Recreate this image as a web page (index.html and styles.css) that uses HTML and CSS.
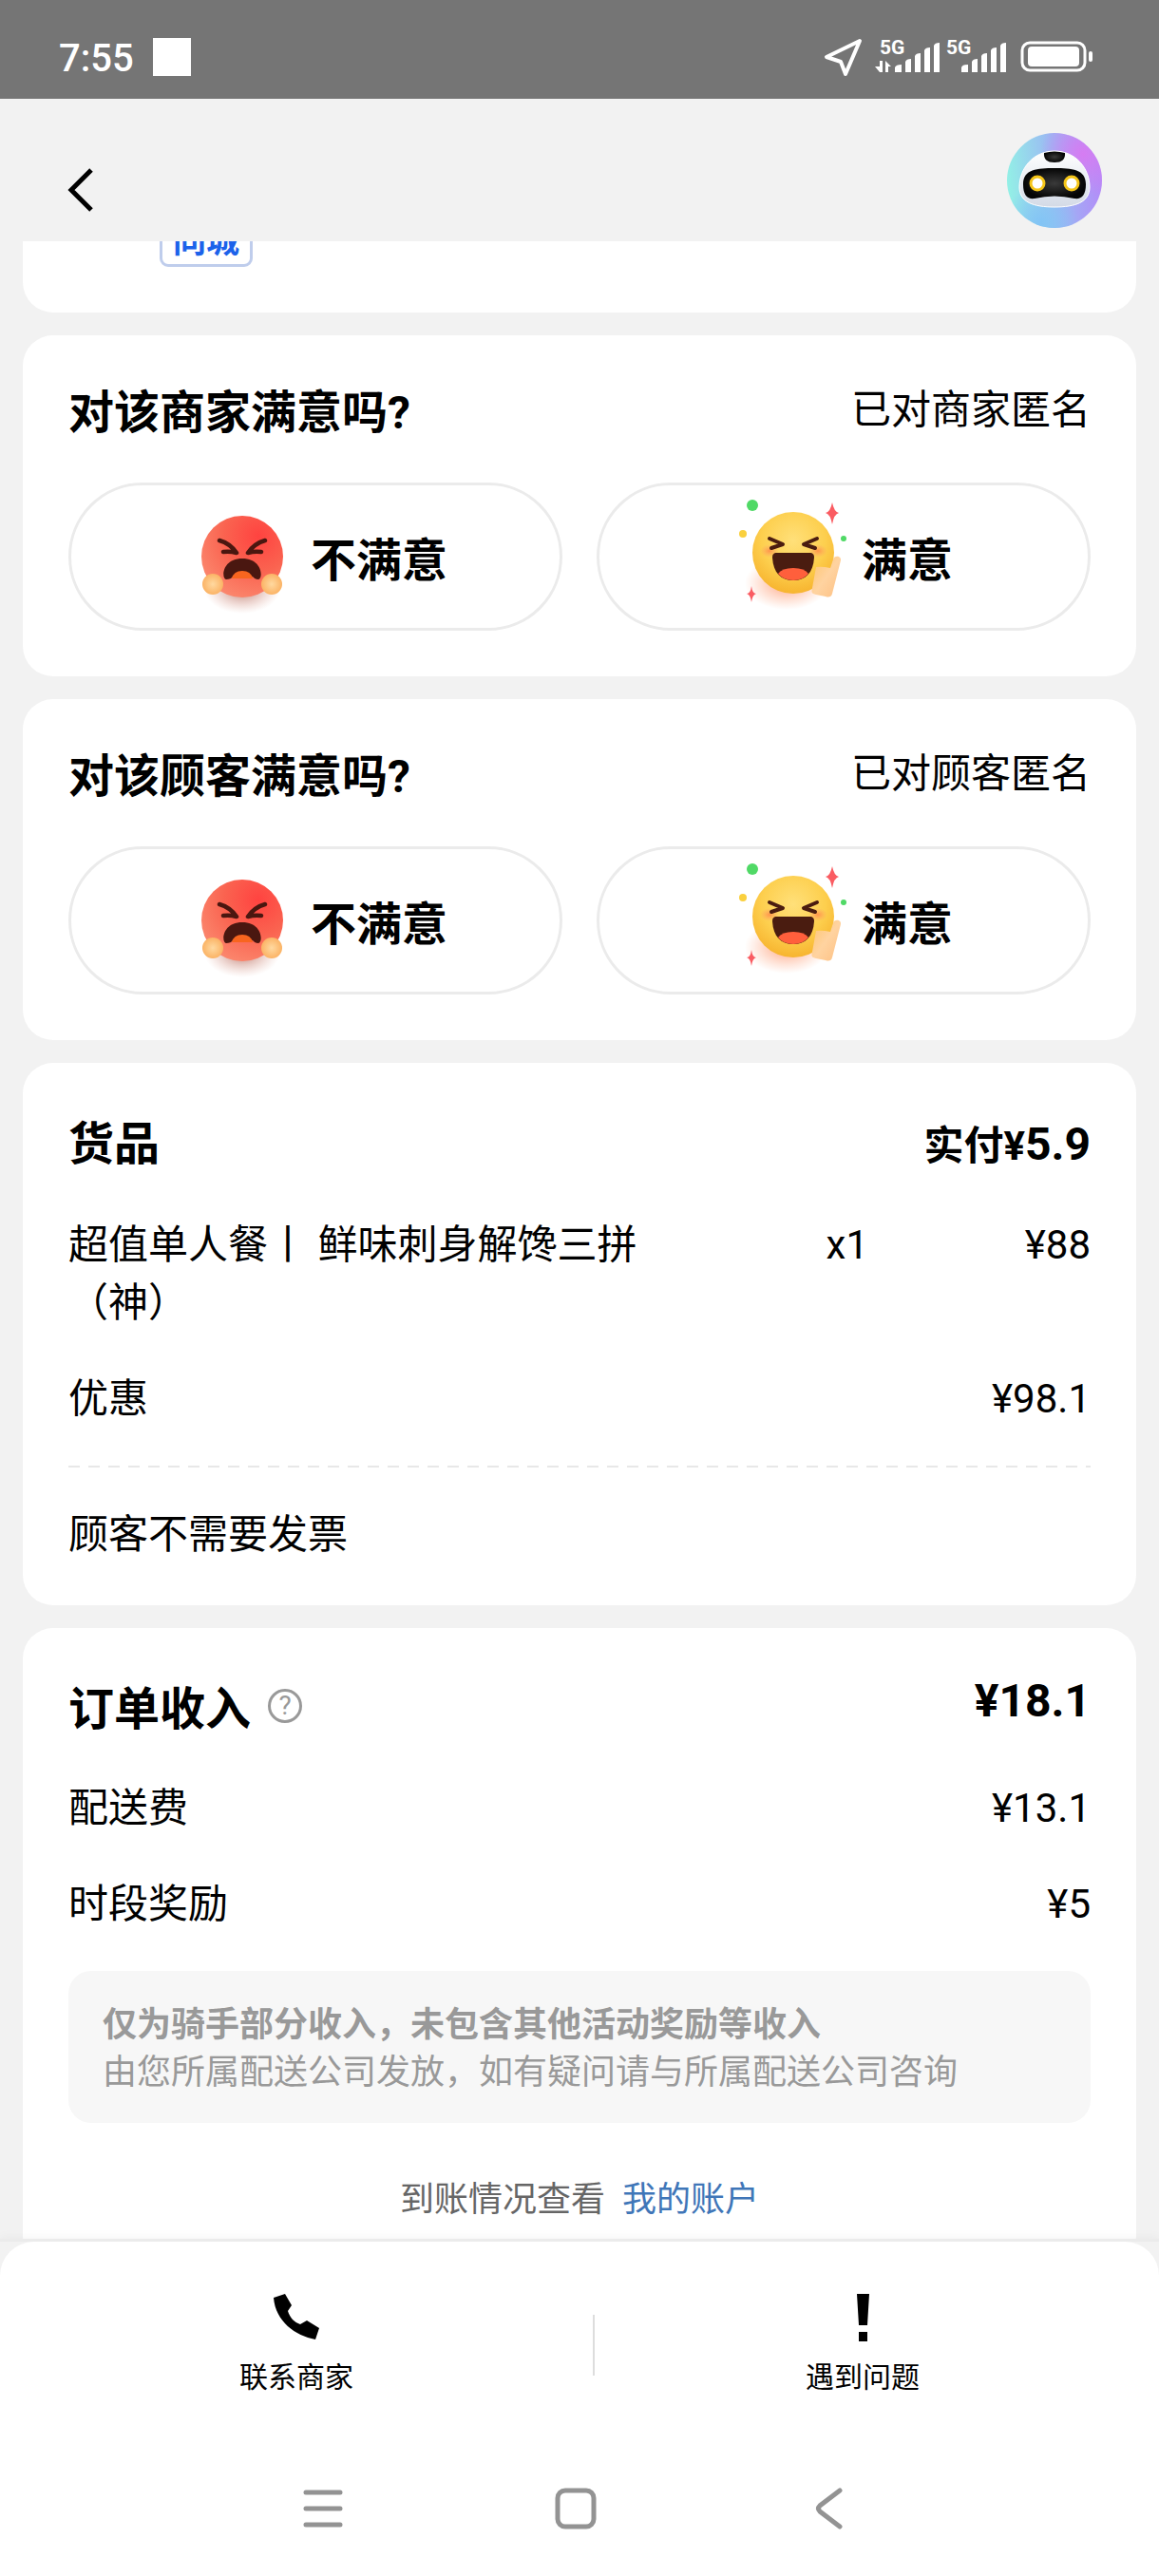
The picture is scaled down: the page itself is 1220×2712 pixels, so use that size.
FILE: index.html
```html
<!DOCTYPE html>
<html lang="zh-CN">
<head>
    <meta charset="UTF-8">
    <meta name="viewport" content="width=device-width, initial-scale=1.0">
    <title>订单详情</title>
    <link rel="stylesheet" href="styles.css">
</head>
<body>
    <!-- shared drawings -->
    <svg class="sprite" aria-hidden="true">
        <defs>
            <radialGradient id="angry-skin" cx="0.7" cy="0.25" r="0.85">
                <stop offset="0" stop-color="#ff4340"/>
                <stop offset="0.5" stop-color="#fa6350"/>
                <stop offset="1" stop-color="#fb8a70"/>
            </radialGradient>
            <radialGradient id="happy-skin" cx="0.5" cy="0.35" r="0.65">
                <stop offset="0" stop-color="#ffe07a"/>
                <stop offset="0.6" stop-color="#fdcf4e"/>
                <stop offset="1" stop-color="#f7b42f"/>
            </radialGradient>
            <radialGradient id="fist">
                <stop offset="0" stop-color="#ffd9a0"/>
                <stop offset="1" stop-color="#fbb365"/>
            </radialGradient>
            <radialGradient id="glow-red">
                <stop offset="0" stop-color="#a8584a" stop-opacity="0.8"/>
                <stop offset="1" stop-color="#e0a090" stop-opacity="0"/>
            </radialGradient>
            <radialGradient id="glow-orange">
                <stop offset="0" stop-color="#ff7a45" stop-opacity="0.7"/>
                <stop offset="1" stop-color="#ff9a70" stop-opacity="0"/>
            </radialGradient>
            <linearGradient id="palm" x1="0" y1="0" x2="1" y2="1">
                <stop offset="0" stop-color="#fdc46c"/>
                <stop offset="0.5" stop-color="#ffd3a0"/>
                <stop offset="1" stop-color="#fdc083"/>
            </linearGradient>
        </defs>
        <symbol id="face-angry" viewBox="0 0 128 128">
            <ellipse cx="62" cy="98" rx="40" ry="26" fill="url(#glow-red)"/>
            <circle cx="62" cy="64" r="43" fill="url(#angry-skin)"/>
            <path d="M38 47q11 3 18 13q-7 -2 -14 -1M86 47q-11 3 -18 13q7 -2 14 -1" fill="none" stroke="#4a1710" stroke-width="4.5" stroke-linecap="round" stroke-linejoin="round"/>
            <path d="M45 88c-5 0 -5 -22 17 -22s22 22 17 22c-3 0 -5 -2 -6 -3H52c-1 2 -4 3 -7 3z" fill="#4a1710"/>
            <path d="M51 87q2 -8 11 -8t11 8z" fill="#f8651f"/>
            <circle cx="31" cy="93" r="11" fill="url(#fist)"/>
            <circle cx="93" cy="93" r="11" fill="url(#fist)"/>
        </symbol>
        <symbol id="face-happy" viewBox="0 0 128 128">
            <ellipse cx="55" cy="92" rx="44" ry="28" fill="url(#glow-orange)"/>
            <circle cx="62" cy="60" r="43" fill="url(#happy-skin)"/>
            <ellipse cx="37" cy="58" rx="10" ry="7" fill="url(#glow-orange)"/>
            <ellipse cx="88" cy="58" rx="10" ry="7" fill="url(#glow-orange)"/>
            <path d="M37 45l14 6l-12 4M87 45l-14 6l12 4" fill="none" stroke="#4a1c10" stroke-width="4" stroke-linecap="round" stroke-linejoin="round"/>
            <path d="M45 60H79c4 0 5 2 5 5c-1 16 -9 24 -22 24s-21 -8 -22 -24c0 -3 1 -5 5 -5z" fill="#4a1c10"/>
            <path d="M46 82q4 -6 16 -6t16 6q-6 7 -16 7t-16 -7z" fill="#ff5f3c"/>
            <path d="M86 75q6 -1 15 1l3 -9c1 -5 9 -4 8 1l-9 35c-1 4 -4 4 -7 3l-10 -2c-5 -1 -5 -3 -4 -7z" fill="url(#palm)"/>
            <circle cx="19" cy="10" r="6" fill="#50d966"/>
            <circle cx="9" cy="40" r="4" fill="#fad03e"/>
            <circle cx="115" cy="45" r="3" fill="#50d966"/>
            <path d="M103 7q2 10 7 11q-5 1 -7 12q-2 -11 -7 -12q5 -1 7 -11zM18 95q1 8 5 8q-4 1 -5 9q-1 -8 -5 -9q4 0 5 -8z" fill="#fa5c62"/>
        </symbol>
    </svg>

    <div class="status-bar">
        <div class="status-left">
            <span class="clock">7:55</span>
            <span class="status-block"></span>
        </div>
        <svg class="status-icons" viewBox="0 0 284 44" width="284" height="44" role="img" aria-label="信号与电量">
            <path d="M37 3L2 20L17 25L22 38Z" fill="none" stroke="#fff" stroke-width="4" stroke-linejoin="round"/>
            <g fill="#fff">
                <path d="M58 24h3v12h-3L53 30h5zM64 36V24l6 6h-3v6z"/>
                <text class="signal-text" x="58" y="17">5G</text>
                <path d="M74 36v-5q1 -3 7 -3v8zM85 36V25q1 -3 6 -3v14zM95 36V19q1 -3 6 -3v20zM105 36V13q1 -3 6 -3v26zM115 36V8q1 -3 6 -3v31z"/>
                <text class="signal-text" x="128" y="17">5G</text>
                <path d="M144 36v-5q1 -3 7 -3v8zM155 36V25q1 -3 6 -3v14zM165 36V19q1 -3 6 -3v20zM175 36V13q1 -3 6 -3v26zM185 36V8q1 -3 6 -3v31z"/>
                <rect x="214" y="9" width="54" height="21" rx="4"/>
                <rect x="278" y="14" width="4" height="11" rx="2"/>
            </g>
            <rect x="208" y="5" width="66" height="29" rx="8" fill="none" stroke="#fff" stroke-width="3"/>
        </svg>
    </div>

    <header class="top-bar">
        <button class="back-btn" type="button" aria-label="返回">
            <svg viewBox="0 0 50 50" width="50" height="50"><path d="M36 4L15 25L36 46" fill="none" stroke="#000" stroke-width="5"/></svg>
        </button>
        <button class="robot-btn" type="button" aria-label="智能客服">
            <svg viewBox="0 0 100 100" width="100" height="100">
                <defs>
                    <linearGradient id="halo" x1="0" y1="0.5" x2="1" y2="0.4">
                        <stop offset="0" stop-color="#93f0e6"/>
                        <stop offset="0.5" stop-color="#9bb8f3"/>
                        <stop offset="1" stop-color="#b48af8"/>
                    </linearGradient>
                    <radialGradient id="halo-pink" cx="0.8" cy="0.22" r="0.45">
                        <stop offset="0" stop-color="#d67cf2"/>
                        <stop offset="1" stop-color="#d67cf2" stop-opacity="0"/>
                    </radialGradient>
                    <radialGradient id="halo-blue" cx="0.35" cy="0.95" r="0.4">
                        <stop offset="0" stop-color="#82c4f5"/>
                        <stop offset="1" stop-color="#82c4f5" stop-opacity="0"/>
                    </radialGradient>
                    <linearGradient id="shell" x1="0" y1="0" x2="0" y2="1">
                        <stop offset="0" stop-color="#fff"/>
                        <stop offset="1" stop-color="#d3dae6"/>
                    </linearGradient>
                    <radialGradient id="visor">
                        <stop offset="0" stop-color="#3a3a3a"/>
                        <stop offset="1" stop-color="#050505"/>
                    </radialGradient>
                </defs>
                <circle cx="50" cy="50" r="50" fill="url(#halo)"/>
                <circle cx="50" cy="50" r="50" fill="url(#halo-pink)"/>
                <circle cx="50" cy="50" r="50" fill="url(#halo-blue)"/>
                <path d="M50 19C72 19 87 37 87 57C87 73 72 78 50 78S13 73 13 57C13 37 28 19 50 19Z" fill="url(#shell)" stroke="#fff" stroke-width="1"/>
                <path d="M39 21q11 -3 22 0q1 10 -11 10t-11 -10z" fill="url(#visor)"/>
                <path d="M50 37C68 37 83 38 83 54C83 66 78 70 71 69Q50 64 29 69C22 70 17 66 17 54C17 38 32 37 50 37Z" fill="url(#visor)"/>
                <circle cx="32" cy="53" r="7" fill="#fff" stroke="#f5c518" stroke-width="3"/>
                <circle cx="68" cy="53" r="7" fill="#fff" stroke="#f5c518" stroke-width="3"/>
            </svg>
        </button>
    </header>

    <main class="content">
        <section class="card card-scrolled">
            <span class="tag">同城</span>
        </section>

        <section class="card">
            <div class="card-head">
                <h2>对该商家满意吗?</h2>
                <span class="note">已对商家匿名</span>
            </div>
            <div class="rate">
                <button class="rate-btn" type="button">
                    <svg width="128" height="128" aria-hidden="true"><use href="#face-angry"/></svg>
                    不满意
                </button>
                <button class="rate-btn" type="button">
                    <svg width="128" height="128" aria-hidden="true"><use href="#face-happy"/></svg>
                    满意
                </button>
            </div>
        </section>

        <section class="card">
            <div class="card-head">
                <h2>对该顾客满意吗?</h2>
                <span class="note">已对顾客匿名</span>
            </div>
            <div class="rate">
                <button class="rate-btn" type="button">
                    <svg width="128" height="128" aria-hidden="true"><use href="#face-angry"/></svg>
                    不满意
                </button>
                <button class="rate-btn" type="button">
                    <svg width="128" height="128" aria-hidden="true"><use href="#face-happy"/></svg>
                    满意
                </button>
            </div>
        </section>

        <section class="card card-detail">
            <div class="card-head">
                <h2>货品</h2>
                <span class="paid">实付¥<span class="amount">5.9</span></span>
            </div>
            <div class="rows">
                <div class="goods">
                    <span>超值单人餐丨 鲜味刺身解馋三拼（神）</span>
                    <span class="right">x1</span>
                    <span class="right">¥88</span>
                </div>
                <div class="row"><span>优惠</span><span>¥98.1</span></div>
                <div class="dashed"></div>
                <div class="row">顾客不需要发票</div>
            </div>
        </section>

        <section class="card card-detail">
            <div class="card-head">
                <h2>订单收入</h2>
                <button class="help" type="button" aria-label="收入说明">?</button>
                <span class="amount total">¥18.1</span>
            </div>
            <div class="rows">
                <div class="row"><span>配送费</span><span>¥13.1</span></div>
                <div class="row"><span>时段奖励</span><span>¥5</span></div>
                <div class="tip">
                    <strong>仅为骑手部分收入，未包含其他活动奖励等收入</strong>
                    <p>由您所属配送公司发放，如有疑问请与所属配送公司咨询</p>
                </div>
                <div class="account">到账情况查看<a href="#">我的账户</a></div>
            </div>
        </section>
    </main>

    <footer class="bottom">
        <div class="sheet">
            <div class="actions">
                <button class="action" type="button">
                    <svg viewBox="0 0 54 54" width="54" height="54" aria-hidden="true"><path d="M3 7L15 3L22 15L18 21C20 28 25 33 31 35L38 31L51 39L47 51C26 47 5 32 3 7Z"/></svg>
                    联系商家
                </button>
                <span class="divider"></span>
                <button class="action" type="button">
                    <svg viewBox="0 0 54 54" width="54" height="54" aria-hidden="true"><path d="M21 3H34L32 36H23ZM23 43H32V53H23Z"/></svg>
                    遇到问题
                </button>
            </div>
            <nav class="sys-nav">
                <button type="button" aria-label="最近任务"><svg viewBox="0 0 44 44" width="44" height="44"><path d="M4 5H40M4 22H40M4 39H40"/></svg></button>
                <button type="button" aria-label="主屏幕"><svg viewBox="0 0 44 44" width="44" height="44"><rect x="3" y="3" width="38" height="38" rx="8"/></svg></button>
                <button type="button" aria-label="返回上级"><svg viewBox="0 0 44 44" width="44" height="44"><path d="M34 3L13 19Q10 22 13 25L34 41"/></svg></button>
            </nav>
        </div>
    </footer>
</body>
</html>
```
FILE: styles.css
```css
* {
    box-sizing: border-box;
}
body {
    margin: 0;
    height: 100vh;
    display: flex;
    flex-direction: column;
    background: #f2f2f2;
    color: #000;
    font-family: Roboto, "Noto Sans CJK SC", sans-serif;
    font-size: 42px;
    line-height: 61px;
    text-spacing-trim: space-all;
}
button {
    padding: 0;
    border: none;
    background: none;
    color: inherit;
    font-family: inherit;
    cursor: pointer;
}
svg {
    display: block;
    flex: none;
}
h2, p {
    margin: 0;
}
.sprite {
    position: absolute;
    width: 0;
    height: 0;
}

/* status bar */
.status-bar {
    flex: none;
    display: flex;
    justify-content: space-between;
    padding: 40px 68px 20px 62px;
    background: #757575;
    color: #fff;
}
.status-left {
    display: flex;
    align-items: flex-start;
    gap: 20px;
}
.status-icons {
    overflow: visible;
}
.clock {
    font-size: 40px;
    font-weight: 500;
    line-height: 44px;
}
.status-block {
    width: 40px;
    height: 40px;
    background: #fff;
}
.signal-text {
    font-size: 21px;
    font-weight: 700;
}

/* header */
.top-bar {
    flex: none;
    display: flex;
    justify-content: space-between;
    align-items: flex-end;
    padding: 36px 60px 14px;
}
.back-btn {
    display: flex;
    align-items: center;
    height: 80px;
}

/* cards */
.content {
    flex: 1;
    min-height: 0;
    overflow: hidden;
    display: flex;
    flex-direction: column;
    gap: 24px;
    padding: 0 24px;
}
.card {
    flex: none;
    padding: 48px;
    border-radius: 32px;
    background: #fff;
}
.card-scrolled {
    display: flex;
    margin-top: -61px;
    padding: 40px 48px 48px 144px;
}
.card-detail {
    padding: 52px 48px 44px;
}
.tag {
    padding: 0 11px 4px;
    border: 3px solid #bfcdec;
    border-radius: 9px;
    color: #1c62ea;
    font-size: 35px;
    font-weight: 700;
    line-height: 38px;
}
.card-head {
    display: flex;
    justify-content: space-between;
    margin-bottom: 40px;
    line-height: 67px;
}
.card-head h2 {
    font-size: 48px;
    font-weight: 700;
}
.note {
    line-height: 61px;
}
.paid {
    font-weight: 700;
}
.amount {
    font-size: 48px;
    font-weight: 700;
}
.total {
    line-height: 50px;
}
.help {
    width: 36px;
    height: 36px;
    margin: 12px auto 0 18px;
    border: 3px solid #999;
    border-radius: 50%;
    color: #999;
    font-size: 28px;
    line-height: 30px;
}

/* rating */
.rate {
    display: grid;
    grid-template-columns: 1fr 1fr;
    gap: 36px;
}
.rate-btn {
    display: flex;
    align-items: center;
    justify-content: center;
    gap: 6px;
    height: 156px;
    border: 3px solid #ebebeb;
    border-radius: 78px;
    font-size: 48px;
    font-weight: 700;
}

/* goods and income */
.rows {
    display: flex;
    flex-direction: column;
    gap: 40px;
}
.row {
    display: flex;
    justify-content: space-between;
}
.goods {
    display: grid;
    grid-template-columns: 58% 1fr 234px;
}
.right {
    text-align: right;
}
.dashed {
    height: 2px;
    background: repeating-linear-gradient(90deg, #e8e8e8 0 12px, transparent 12px 21px);
}
.tip {
    padding: 32px 36px 28px;
    border-radius: 24px;
    background: #f7f7f7;
    color: #999;
    font-size: 36px;
    line-height: 50px;
}
.account {
    display: flex;
    justify-content: center;
    gap: 18px;
    padding-top: 16px;
    color: #666;
    font-size: 36px;
    line-height: 50px;
}
.account a {
    color: #3f76b8;
    text-decoration: none;
}

/* bottom sheet */
.bottom {
    flex: none;
    position: relative;
    border-top: 3px solid #ebebeb;
    background: #f2f2f2;
    box-shadow: 0 -2px 10px rgba(0, 0, 0, 0.04);
}
.sheet {
    border-radius: 36px 36px 0 0;
    background: #fff;
}
.actions {
    display: flex;
    align-items: center;
    padding: 52px 30px 0;
}
.action {
    flex: 1;
    display: flex;
    flex-direction: column;
    align-items: center;
    gap: 15px;
    font-size: 30px;
    line-height: 44px;
}
.divider {
    width: 2px;
    height: 64px;
    margin-left: 30px;
    background: #ddd;
}
.sys-nav {
    display: flex;
    justify-content: center;
    gap: 222px;
    padding: 94px 8px 49px 0;
}
.sys-nav path, .sys-nav rect {
    fill: none;
    stroke: #939393;
    stroke-width: 5;
    stroke-linecap: round;
}
```
